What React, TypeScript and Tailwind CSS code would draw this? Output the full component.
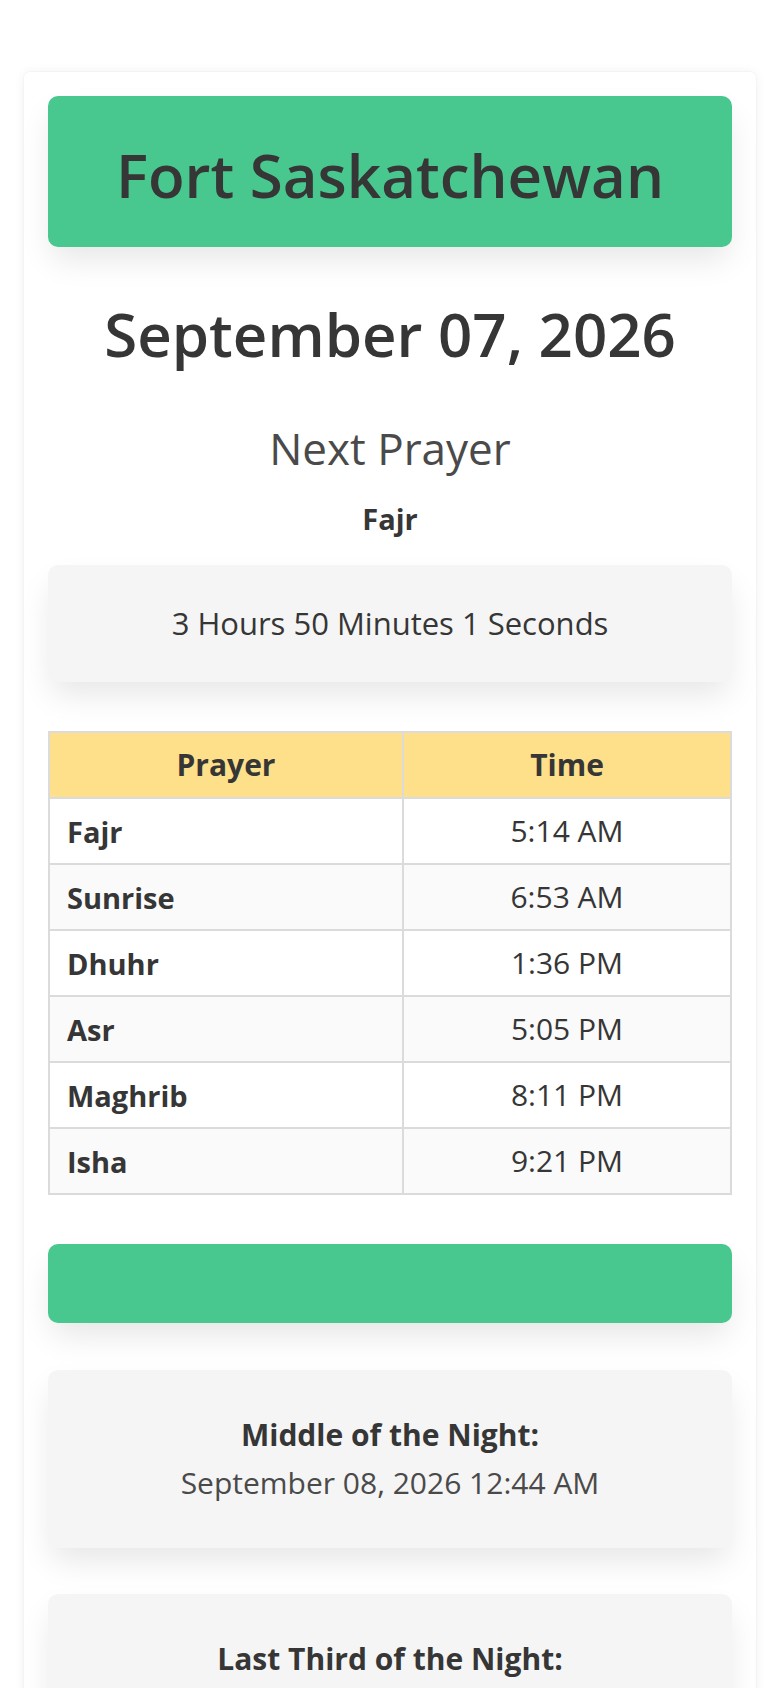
const prayers = [
  { name: "Fajr", time: "5:14 AM" },
  { name: "Sunrise", time: "6:53 AM" },
  { name: "Dhuhr", time: "1:36 PM" },
  { name: "Asr", time: "5:05 PM" },
  { name: "Maghrib", time: "8:11 PM" },
  { name: "Isha", time: "9:21 PM" },
]

const font = { fontFamily: '"Open Sans", "Noto Sans", sans-serif' }

export default function App() {
  return (
    <div className="min-h-screen bg-white pt-[72px] pb-10 text-[#363636]" style={font}>
      <div className="mx-6 rounded-md bg-white p-6 shadow-[0_0_12px_rgba(10,10,10,0.06),0_0_0_1px_rgba(10,10,10,0.02)]">
        {/* City header */}
        <div className="flex h-[151px] items-center justify-center rounded-[10px] bg-[#48c78e] pt-[6px] shadow-[0_16px_32px_-4px_rgba(10,10,10,0.1)]">
          <h1 className="text-[60px] font-semibold leading-none">Fort Saskatchewan</h1>
        </div>

        <h2 className="mt-[55px] flex h-[64px] items-center justify-center text-[60px] font-semibold leading-none">
          September 07, 2026
        </h2>

        <h3 className="mt-[58px] flex h-[48px] items-center justify-center text-[44px] font-normal leading-none text-[#4a4a4a]">
          Next Prayer
        </h3>
        <p className="mt-[31px] flex h-[30px] items-center justify-center text-[29px] font-bold leading-none">
          Fajr
        </p>

        {/* Countdown */}
        <div className="mt-[32px] flex h-[117px] items-center justify-center rounded-[10px] bg-[#f5f5f5] shadow-[0_16px_32px_-4px_rgba(10,10,10,0.1)]">
          <span className="text-[31px] font-medium leading-none">3 Hours 50 Minutes 1 Seconds</span>
        </div>

        {/* Prayer times */}
        <table className="mt-[49px] w-full border-collapse border-2 border-[#dbdbdb] text-[30px] leading-none">
          <thead>
            <tr className="h-[66px] bg-[#ffe08a]">
              <th className="w-[354px] border-2 border-[#dbdbdb] font-bold">Prayer</th>
              <th className="border-2 border-[#dbdbdb] font-bold">Time</th>
            </tr>
          </thead>
          <tbody>
            {prayers.map((p, i) => (
              <tr key={p.name} className={i % 2 === 1 ? "h-[66px] bg-[#fafafa]" : "h-[66px] bg-white"}>
                <td className="border-2 border-[#dbdbdb] pl-[17px] text-left text-[29px] font-bold">{p.name}</td>
                <td className="border-2 border-[#dbdbdb] text-center font-normal">{p.time}</td>
              </tr>
            ))}
          </tbody>
        </table>

        <div className="mt-[49px] h-[79px] rounded-[10px] bg-[#48c78e] shadow-[0_16px_32px_-4px_rgba(10,10,10,0.1)]" />

        <NightBox label="Middle of the Night:" value="September 08, 2026 12:44 AM" className="mt-[47px]" />
        <NightBox label="Last Third of the Night:" value="September 08, 2026 2:15 AM" className="mt-[46px]" />
      </div>
    </div>
  )
}

function NightBox({ label, value, className }: { label: string; value: string; className: string }) {
  return (
    <div className={`${className} rounded-[10px] bg-[#f5f5f5] py-[41px] text-center shadow-[0_16px_32px_-4px_rgba(10,10,10,0.1)]`}>
      <div className="text-[30px] font-bold leading-[48px]">{label}</div>
      <div className="text-[30px] font-normal leading-[48px] text-[#4a4a4a]">{value}</div>
    </div>
  )
}
